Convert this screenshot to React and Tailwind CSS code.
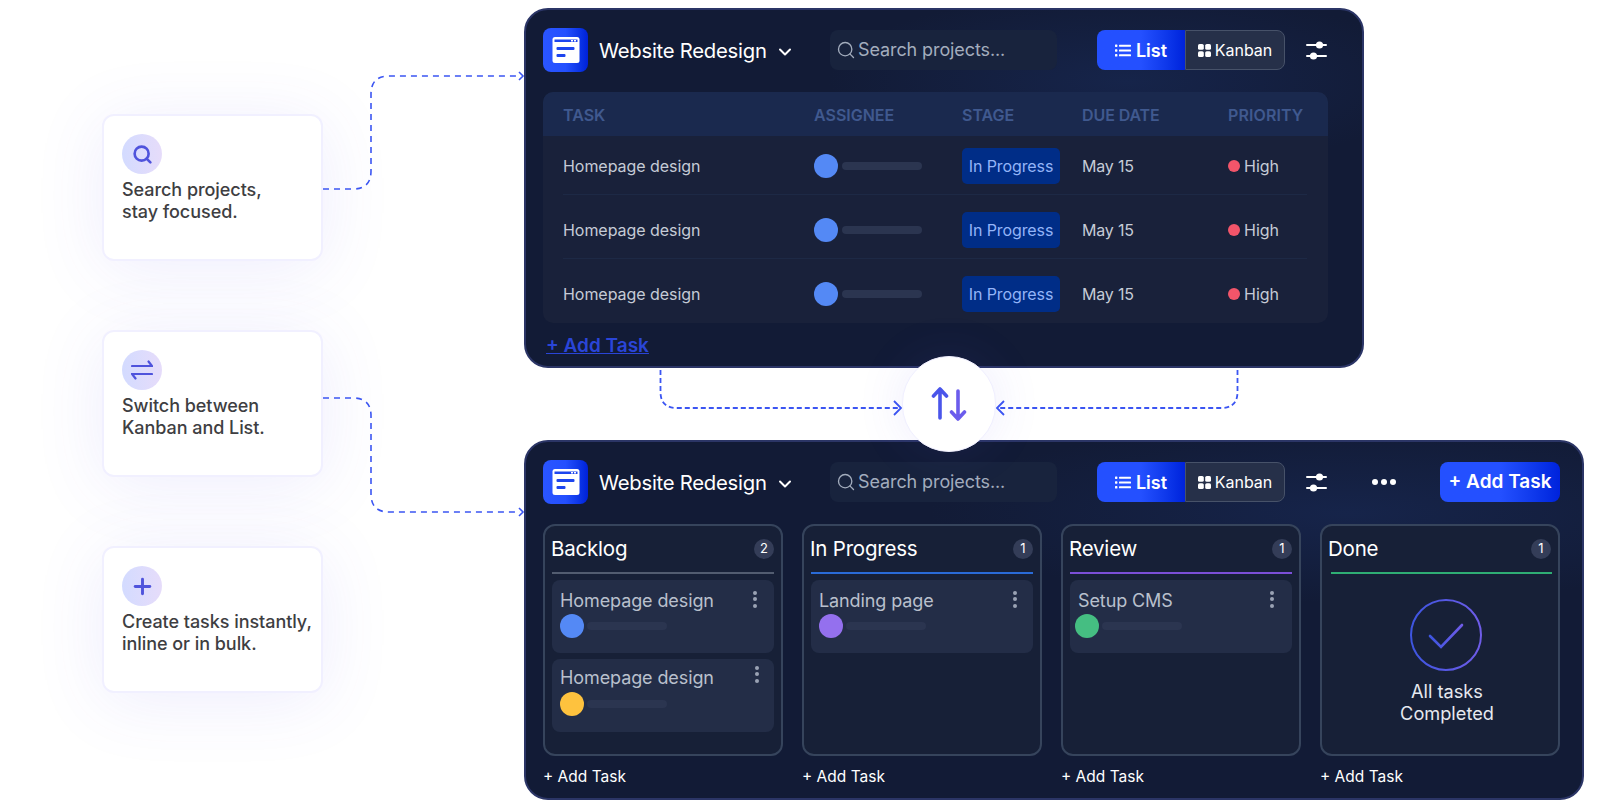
import React from "react";
import { Search, ChevronDown, Plus } from "lucide-react";

function LogoMark() {
  return (
    <div className="w-[45px] h-[44px] shrink-0 rounded-[8px] bg-gradient-to-r from-[#2a55ff] via-[#2450ff] to-[#0020d8] flex items-center justify-center">
      <svg width="28" height="28" viewBox="0 0 28 28">
        <rect x="0.5" y="1" width="27" height="26" rx="2.5" fill="#fff" />
        <rect x="2.5" y="3.5" width="23" height="2.5" fill="#1d45ee" />
        <rect x="19" y="4" width="2" height="1.5" fill="#fff" />
        <rect x="22" y="4" width="2" height="1.5" fill="#fff" />
        <rect x="4.5" y="11" width="18" height="3" rx="1" fill="#1d45ee" />
        <rect x="4.5" y="18" width="9" height="3" rx="1" fill="#1d45ee" />
      </svg>
    </div>
  );
}

function ListGlyph() {
  return (
    <svg width="16" height="13" viewBox="0 0 16 13" fill="#fff" className="shrink-0">
      <rect x="0" y="0.5" width="2.4" height="2.4" rx="0.6" />
      <rect x="0" y="5.3" width="2.4" height="2.4" rx="0.6" />
      <rect x="0" y="10.1" width="2.4" height="2.4" rx="0.6" />
      <rect x="4" y="0.7" width="12" height="2" rx="0.6" />
      <rect x="4" y="5.5" width="12" height="2" rx="0.6" />
      <rect x="4" y="10.3" width="12" height="2" rx="0.6" />
    </svg>
  );
}

function GridGlyph() {
  return (
    <svg width="13" height="13" viewBox="0 0 13 13" fill="#fff" className="shrink-0">
      <rect x="0" y="0" width="5.8" height="5.8" rx="1.6" />
      <rect x="7.2" y="0" width="5.8" height="5.8" rx="1.6" />
      <rect x="0" y="7.2" width="5.8" height="5.8" rx="1.6" />
      <rect x="7.2" y="7.2" width="5.8" height="5.8" rx="1.6" />
    </svg>
  );
}

function SlidersGlyph() {
  return (
    <svg width="21" height="20" viewBox="0 0 21 20" fill="#fff" className="shrink-0">
      <rect x="0" y="4" width="21" height="2" rx="1" />
      <rect x="0" y="15" width="21" height="2" rx="1" />
      <circle cx="13.5" cy="5" r="3.6" />
      <circle cx="7.5" cy="16" r="3.6" />
    </svg>
  );
}

function TopBar({ extra }) {
  return (
    <div className="flex items-center h-[44px]">
      <div className="w-[287px] shrink-0 flex items-center">
        <LogoMark />
        <span className="ml-[11px] mt-[1px] text-[20.3px] leading-[26px] text-white tracking-[-0.25px]">Website Redesign</span>
        <ChevronDown className="ml-[8px] mt-[4px] text-white" size={20} strokeWidth={2.4} />
      </div>
      <div className="w-[227px] h-[40px] shrink-0 rounded-[8px] bg-[#18233d] flex items-center pl-[6px] gap-[2px] text-[#a3adbd]">
        <Search size={20} strokeWidth={1.6} />
        <span className="text-[18px] tracking-[-0.1px] -mt-[1px]">Search projects...</span>
      </div>
      <div className="ml-[40px] w-[188px] h-[40px] shrink-0 flex">
        <div className="w-[88px] rounded-l-[8px] bg-gradient-to-r from-[#2450ff] via-[#2450ff] to-[#0022dc] flex items-center justify-center gap-[5px] text-white font-semibold text-[18px]">
          <ListGlyph />
          <span>List</span>
        </div>
        <div className="w-[100px] rounded-r-[8px] bg-[#263049] border border-[#475269] flex items-center justify-center gap-[4px] text-white text-[16px]">
          <GridGlyph />
          <span>Kanban</span>
        </div>
      </div>
      <div className="ml-[21px]">
        <SlidersGlyph />
      </div>
      {extra}
    </div>
  );
}

function Row({ first, last }) {
  return (
    <div className={`flex items-center text-[16px] text-[#c5cbd6] pl-[20px] ${first ? "pt-[12px]" : "pt-[17px]"} ${last ? "pb-[11px]" : "pb-[10px]"}`}>
      <div className="w-[251px] shrink-0 tracking-[-0.05px]">Homepage design</div>
      <div className="w-[148px] shrink-0 flex items-center gap-[4px]">
        <div className="w-[24px] h-[24px] rounded-full bg-[#5489f5]" />
        <div className="w-[80px] h-[8px] rounded-full bg-[#2b3550]" />
      </div>
      <div className="w-[120px] shrink-0">
        <div className="w-[98px] h-[36px] rounded-[5px] bg-[#002d87] text-[#93b4f8] flex items-center justify-center tracking-[-0.1px]">In Progress</div>
      </div>
      <div className="w-[146px] shrink-0 tracking-[-0.2px]">May 15</div>
      <div className="flex items-center gap-[4px]">
        <div className="w-[12px] h-[12px] rounded-full bg-[#f2556a]" />
        <span>High</span>
      </div>
    </div>
  );
}

function ListPanel() {
  return (
    <section className="w-[840px] h-[360px] rounded-[24px] border-2 border-[#2b3566] bg-[#121b36] bg-[radial-gradient(ellipse_300px_90px_at_72%_20%,#16244a_0%,#121b36_100%)] px-[17px] pt-[18px]">
      <TopBar />
      <div className="mt-[20px] w-[785px] h-[231px] rounded-[10px] bg-[#19213a] overflow-hidden">
        <div className="h-[44px] pt-[1px] bg-[#1a294e] flex items-center pl-[20px] text-[16px] font-semibold text-[#40598f]">
          <div className="w-[251px]">TASK</div>
          <div className="w-[148px]">ASSIGNEE</div>
          <div className="w-[120px]">STAGE</div>
          <div className="w-[146px] tracking-[-0.1px]">DUE DATE</div>
          <div className="tracking-[0.1px]">PRIORITY</div>
        </div>
        <Row first />
        <div className="ml-[20px] w-[744px] h-px bg-[#1d2945]" />
        <Row />
        <div className="ml-[20px] w-[744px] h-px bg-[#1d2945]" />
        <Row last />
      </div>
      <div className="mt-[11px] ml-[3px] text-[19px] leading-[24px] font-semibold text-[#2a45d8] underline">+ Add Task</div>
    </section>
  );
}

function Dots() {
  return (
    <div className="flex flex-col gap-[2.4px] shrink-0">
      <div className="w-[4px] h-[4px] rounded-full bg-[#9aa2b4]" />
      <div className="w-[4px] h-[4px] rounded-full bg-[#9aa2b4]" />
      <div className="w-[4px] h-[4px] rounded-full bg-[#9aa2b4]" />
    </div>
  );
}

function TaskCard({ title, color, dotsPad = "pr-[17px]", avatarShift = "", second = false }) {
  return (
    <div className={`h-[73px] rounded-[8px] bg-[#232d47] pl-[8px] ${second ? "pt-[7px]" : "pt-[9px]"}`}>
      <div className={`flex justify-between ${dotsPad}`}>
        <span className="text-[18px] leading-[24px] text-[#b9c0cd] tracking-[-0.1px]">{title}</span>
        <div className={second ? "" : "mt-[2px]"}><Dots /></div>
      </div>
      <div className={`${second ? "mt-[2px]" : "mt-[1px]"} flex items-center gap-[3px] ${avatarShift}`}>
        <div className={`w-[24px] h-[24px] rounded-full ${color}`} />
        <div className="w-[80px] h-[8px] rounded-full bg-[#2b3550]" />
      </div>
    </div>
  );
}

function Column({ title, count, line, lineInset = "", children }) {
  return (
    <div className="h-[232px] rounded-[12px] border-2 border-[#36445c] bg-[#172037] px-[7px]">
      <div className="h-[46px] flex items-center justify-between">
        <span className="-ml-[1px] text-[20.5px] text-white tracking-[-0.2px]">{title}</span>
        <span className="w-[20px] h-[20px] rounded-full bg-[#343d58] text-white text-[13px] flex items-center justify-center">{count}</span>
      </div>
      <div className={`h-[2px] ${line} ${lineInset}`} />
      <div className="mt-[6px] flex flex-col gap-[6px]">{children}</div>
    </div>
  );
}

function KanbanPanel() {
  return (
    <section className="relative w-[1060px] h-[360px] rounded-[24px] border-2 border-[#2b3566] bg-[#121b36] bg-[radial-gradient(ellipse_420px_90px_at_78%_20%,#16244a_0%,#121b36_100%)] px-[17px] pt-[18px]">
      <TopBar
        extra={
          <>
            <div className="ml-[45px] w-[24px] flex justify-between">
              <div className="w-[6px] h-[6px] rounded-full bg-white" />
              <div className="w-[6px] h-[6px] rounded-full bg-white" />
              <div className="w-[6px] h-[6px] rounded-full bg-white" />
            </div>
            <div className="ml-[44px] w-[120px] h-[40px] rounded-[8px] bg-gradient-to-r from-[#2450ff] via-[#2450ff] to-[#0022dc] flex items-center justify-center text-white text-[19px] font-semibold whitespace-nowrap">+ Add Task</div>
          </>
        }
      />
      <div className="mt-[20px] grid grid-cols-[240px_240px_240px_240px] gap-x-[19px]">
        <Column title="Backlog" count="2" line="bg-[#525c70]">
          <TaskCard title="Homepage design" color="bg-[#5489f5]" />
          <TaskCard title="Homepage design" color="bg-[#fec23e]" dotsPad="pr-[15.5px]" second />
        </Column>
        <Column title="In Progress" count="1" line="bg-[#2a6bd8]">
          <TaskCard title="Landing page" color="bg-[#9470ee]" dotsPad="pr-[16px]" />
        </Column>
        <Column title="Review" count="1" line="bg-[#7c4fd8]">
          <TaskCard title="Setup CMS" color="bg-[#45be82]" dotsPad="pr-[18px]" avatarShift="-ml-[3px]" />
        </Column>
        <Column title="Done" count="1" line="bg-[#2fae74]" lineInset="ml-[2px] mr-[-1px]">
          <div className="flex flex-col items-center pl-[12px] pt-[19px]">
            <svg width="72" height="72" viewBox="0 0 72 72" fill="none">
              <defs>
                <linearGradient id="ck" x1="0" y1="0" x2="1" y2="0">
                  <stop offset="0" stopColor="#3d55e0" />
                  <stop offset="1" stopColor="#6f5ce8" />
                </linearGradient>
              </defs>
              <circle cx="36" cy="36" r="35" stroke="url(#ck)" strokeWidth="2" />
              <path d="M20 37 L31 48 L52 26" stroke="url(#ck)" strokeWidth="2.6" strokeLinecap="round" strokeLinejoin="miter" />
            </svg>
            <div className="mt-[9px] ml-[2px] text-[18.2px] leading-[22px] text-[#e6e9ef] text-center">All tasks<br />Completed</div>
          </div>
        </Column>
      </div>
      <div className="mt-[11px] grid grid-cols-[240px_240px_240px_240px] gap-x-[19px] text-[15.5px] leading-[20px] text-white">
        <span>+ Add Task</span>
        <span>+ Add Task</span>
        <span>+ Add Task</span>
        <span>+ Add Task</span>
      </div>
    </section>
  );
}

function Tip({ icon, children }) {
  return (
    <div className="w-[221px] h-[147px] rounded-[12px] border-2 border-[#f1f0ff] bg-white shadow-[0_8px_70px_rgba(90,80,240,0.10)] pl-[18px] pt-[18px]">
      <div className="w-[40px] h-[40px] rounded-full bg-gradient-to-r from-[#d3dbff] to-[#e6dcfa] flex items-center justify-center text-[#4f53dc]">{icon}</div>
      <p className="mt-[5px] text-[18px] leading-[22px] font-medium text-[#3e3e42] whitespace-nowrap tracking-[-0.05px]">{children}</p>
    </div>
  );
}

function SwapGlyph() {
  return (
    <svg width="22" height="20" viewBox="0 0 22 20" fill="none" stroke="#4f53dc" strokeWidth="2.2" strokeLinecap="round">
      <path d="M1 6 H21 L17.5 1.5" />
      <path d="M21 14 H1 L4.5 18.5" />
    </svg>
  );
}

function Connectors() {
  const solid = { fill: "none", stroke: "#3b55f2", strokeWidth: 1.6 };
  return (
    <svg className="absolute inset-0 pointer-events-none" width="1610" height="800" viewBox="0 0 1610 800">
      <path {...solid} strokeDasharray="6 5" d="M323 189 H353 Q371 189 371 171 V94 Q371 76 389 76 H520" />
      <path {...solid} d="M519 72 L523 76 L519 80" />
      <path {...solid} strokeDasharray="6 5" d="M323 398 H353 Q371 398 371 416 V494 Q371 512 389 512 H520" />
      <path {...solid} d="M519 508 L523 512 L519 516" />
      <path fill="none" stroke="#3b55f2" strokeWidth="1.8" strokeDasharray="5 3" d="M660.5 370 V392 Q660.5 408 677 408 H900" />
      <path fill="none" stroke="#3b55f2" strokeWidth="1.8" strokeDasharray="5 3" d="M1237.5 370 V392 Q1237.5 408 1221 408 H998" />
      <path fill="none" stroke="#3b55f2" strokeWidth="1.8" d="M894 401 L901 408 L894 415" />
      <path fill="none" stroke="#3b55f2" strokeWidth="1.8" d="M1004 401 L997 408 L1004 415" />
    </svg>
  );
}

export default function App() {
  return (
    <div className="relative w-[1610px] h-[800px] overflow-hidden bg-white flex [font-family:Inter,sans-serif]">
      <div className="w-[524px] shrink-0 pl-[102px] pt-[114px] flex flex-col gap-[69px]">
        <Tip icon={<Search size={21} strokeWidth={3} />}>Search projects,<br />stay focused.</Tip>
        <Tip icon={<SwapGlyph />}>Switch between<br />Kanban and List.</Tip>
        <Tip icon={<Plus size={25} strokeWidth={2.8} />}>Create tasks instantly,<br />inline or in bulk.</Tip>
      </div>
      <div className="pt-[8px] flex flex-col gap-[72px]">
        <ListPanel />
        <KanbanPanel />
      </div>
      <Connectors />
      <div className="absolute left-[902px] top-[356px] w-[94px] h-[96px] rounded-full bg-white border border-[#f0efff] shadow-[0_0_50px_rgba(90,80,240,0.10)] flex items-center justify-center">
        <svg width="36" height="36" viewBox="0 0 36 36" fill="none" strokeWidth="3.6" strokeLinecap="round" strokeLinejoin="round">
          <path d="M9 32 V3 M2.5 10 L9 3 L15.5 10" stroke="#4a55ea" />
          <path d="M27 5 V33 M20.5 26 L27 33 L33.5 26" stroke="#6b5cec" />
        </svg>
      </div>
    </div>
  );
}
